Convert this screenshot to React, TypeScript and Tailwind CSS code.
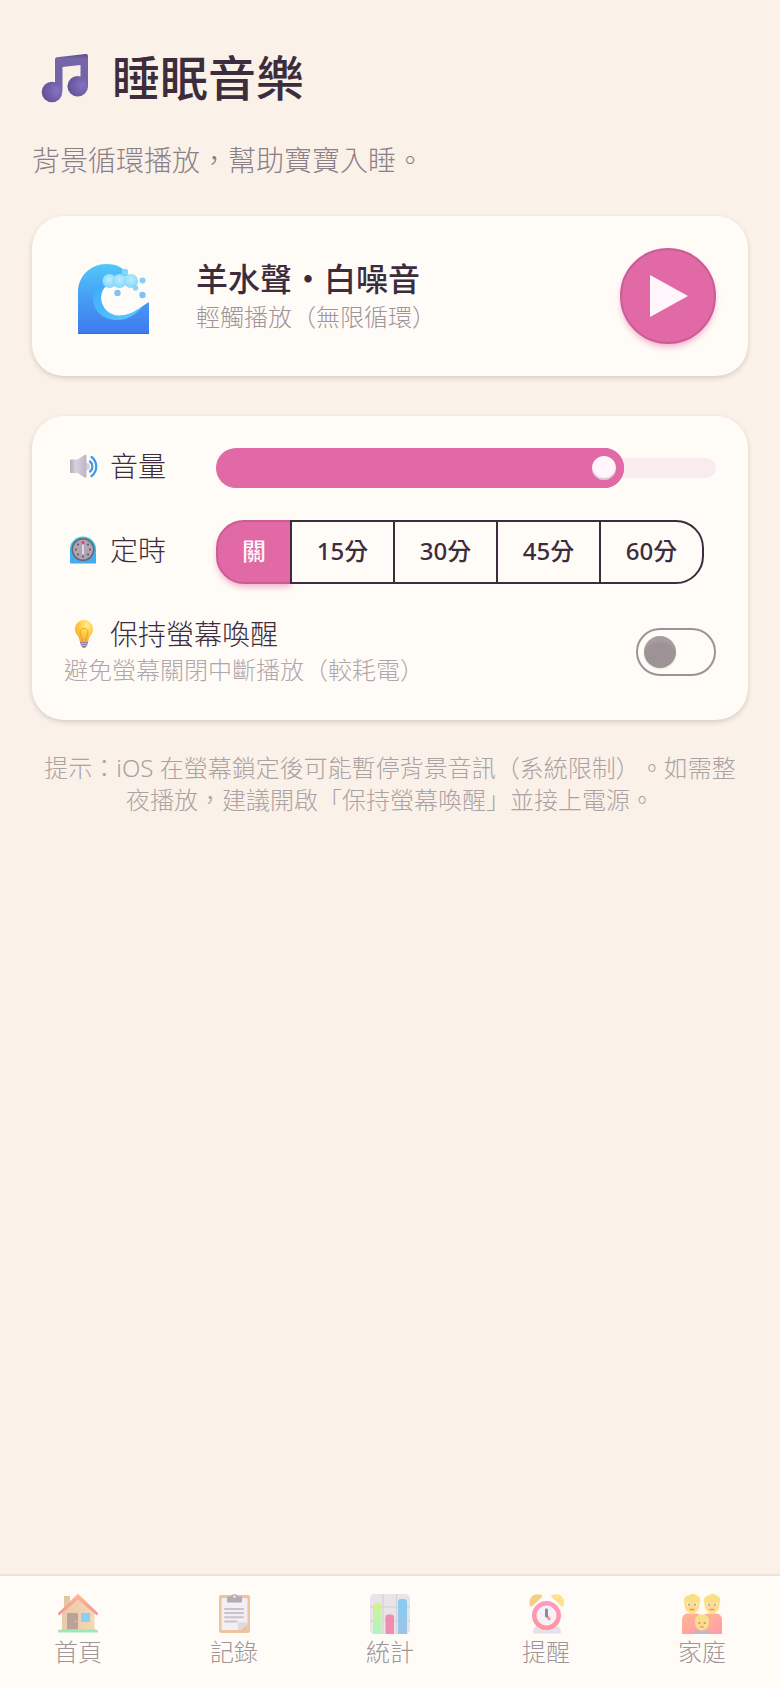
import { useState } from "react";

type IconProps = { className?: string };

function MusicIcon({ className }: IconProps) {
  return (
    <svg viewBox="0 0 48 50" className={className} aria-hidden="true">
      <defs>
        <radialGradient id="note-ball" cx="0.72" cy="0.45" r="0.75">
          <stop offset="0" stopColor="#8672c4" />
          <stop offset="1" stopColor="#5f5092" />
        </radialGradient>
        <linearGradient id="note-beam" x1="0" y1="0" x2="0" y2="1">
          <stop offset="0" stopColor="#5b4a8c" />
          <stop offset="0.12" stopColor="#7566a6" />
          <stop offset="1" stopColor="#7463ab" />
        </linearGradient>
      </defs>
      <path
        d="M15 38V6.500c0-1.300.8-2.100 2-2.300L45.500 1c1.500-.2 2.500.6 2.500 2V34h-7.500V12L22.500 14v24z"
        fill="url(#note-beam)"
      />
      <circle cx="12" cy="39" r="10.300" fill="url(#note-ball)" />
      <circle cx="37.700" cy="33.200" r="10.300" fill="url(#note-ball)" />
    </svg>
  );
}

function WaveIcon({ className }: IconProps) {
  return (
    <svg viewBox="0 0 72 72" className={className} aria-hidden="true">
      <defs>
        <linearGradient id="wave-body" x1="0" y1="0" x2="0" y2="1">
          <stop offset="0" stopColor="#50c8f8" />
          <stop offset="0.5" stopColor="#479cf5" />
          <stop offset="1" stopColor="#3f7aee" />
        </linearGradient>
        <linearGradient id="wave-curl" x1="0" y1="0" x2="1" y2="1">
          <stop offset="0" stopColor="#3da9fb" />
          <stop offset="1" stopColor="#5ccbff" />
        </linearGradient>
        <radialGradient id="wave-foam" cx="0.5" cy="0.4" r="0.6">
          <stop offset="0" stopColor="#b8f0ff" />
          <stop offset="1" stopColor="#86d5fa" />
        </radialGradient>
      </defs>
      <path
        d="M0 70V28C0 12 13 0 28 0c10 0 17 3 22 11L33 18c-6 2-10 8-10 16 0 10 8 18 18 18 14 0 21-9 30-14v32z"
        fill="url(#wave-body)"
      />
      <path
        d="M26 16.500C19 21 15 27 15 34c0 13 10 22 24 22 11 0 20-6 26-14-8 5-14 9.500-24 9.500-10 0-18-8-18-18 0-5 2-9 6-12z"
        fill="url(#wave-curl)"
      />
      <path d="M0 69h71v1H0z" fill="#2f6be8" />
      <circle cx="31.500" cy="17" r="7" fill="url(#wave-foam)" />
      <circle cx="41.500" cy="17" r="7" fill="url(#wave-foam)" />
      <circle cx="53" cy="17" r="7" fill="url(#wave-foam)" />
      <circle cx="47" cy="8" r="3.200" fill="#7fd8fb" />
      <circle cx="57.500" cy="24" r="2.800" fill="#8ad6fb" />
      <circle cx="39.500" cy="29" r="3.200" fill="#7cc4f8" />
      <circle cx="64.500" cy="16.500" r="3" fill="#84cffa" />
      <circle cx="64.500" cy="31" r="3.200" fill="#7cc4f8" />
    </svg>
  );
}

function SpeakerIcon({ className }: IconProps) {
  return (
    <svg viewBox="0 0 28 28" className={className} aria-hidden="true">
      <defs>
        <linearGradient id="speaker-cone" x1="0" y1="0" x2="1" y2="0">
          <stop offset="0" stopColor="#b3abba" />
          <stop offset="0.35" stopColor="#d8d3df" />
          <stop offset="1" stopColor="#bdb4c5" />
        </linearGradient>
      </defs>
      <ellipse cx="17" cy="14.500" rx="3" ry="3.500" fill="#d9d2df" />
      <path
        d="M1 7.500h6.500L14.500 3c1-.5 2 0 2 1v20.500c0 1-1 1.500-2 1L7.500 21H1c-.6 0-1-.4-1-1V8.500c0-.6.4-1 1-1z"
        fill="url(#speaker-cone)"
      />
      <path
        d="M20 9.500c3.300 2.500 3.300 7.500 0 10M21.500 5c6.300 4.500 6.300 14.500 0 19"
        fill="none"
        stroke="#3f97ea"
        strokeWidth="2.200"
        strokeLinecap="round"
      />
    </svg>
  );
}

function TimerIcon({ className }: IconProps) {
  return (
    <svg viewBox="0 0 28 28" className={className} aria-hidden="true">
      <defs>
        <linearGradient id="timer-case" x1="0" y1="0" x2="0" y2="1">
          <stop offset="0" stopColor="#35cbe0" />
          <stop offset="1" stopColor="#42a9f0" />
        </linearGradient>
      </defs>
      <path
        d="M0 26.500V13C0 6 6 .5 13 .5S26 6 26 13v13.500c0 .6-.4 1-1 1H1c-.6 0-1-.4-1-1z"
        fill="url(#timer-case)"
      />
      <circle cx="13" cy="13.500" r="11.500" fill="#6f6472" />
      <circle cx="13" cy="13.500" r="10" fill="#aea4b3" />
      <g fill="#50485a">
        <circle cx="18" cy="8.500" r="0.900" />
        <circle cx="20" cy="13.500" r="0.900" />
        <circle cx="18" cy="18.500" r="0.900" />
        <circle cx="13" cy="20.500" r="0.900" />
        <circle cx="8" cy="18.500" r="0.900" />
        <circle cx="6" cy="13.500" r="0.900" />
        <circle cx="8" cy="8.500" r="0.900" />
      </g>
      <circle cx="13" cy="6.600" r="1.300" fill="#d8305f" />
      <path d="M13 9.500v8" stroke="#e6dfea" strokeWidth="1.800" strokeLinecap="round" />
    </svg>
  );
}

function BulbIcon({ className }: IconProps) {
  return (
    <svg viewBox="0 0 28 28" className={className} aria-hidden="true">
      <defs>
        <radialGradient id="bulb-glass" cx="0.65" cy="0.25" r="0.8">
          <stop offset="0" stopColor="#fff08a" />
          <stop offset="0.5" stopColor="#ffcd42" />
          <stop offset="1" stopColor="#f5a93a" />
        </radialGradient>
      </defs>
      <path
        d="M14 0c5 0 9 4 9 9 0 3.500-2 5.500-3.500 8-.8 1.500-.8 4-1.500 4.500h-8c-.7-.5-.7-3-1.500-4.500C7 14.500 5 12.500 5 9c0-5 4-9 9-9z"
        fill="url(#bulb-glass)"
      />
      <path
        d="M12.500 21l-2-7c-1-4 1-5.500 3.500-5.500s4.500 1.500 3.500 5.500l-2 7"
        fill="none"
        stroke="#f0a02e"
        strokeWidth="1"
      />
      <path d="M10 21.500h8v2.200l-1 .6.500 1-1.500 1.700c-.8 1.300-3.200 1.300-4 0L10.500 25l.5-.8-1-.7z" fill="#9a80ab" />
      <path d="M10.500 23.500h7M11 25.500h5.500" stroke="#c9b5d2" strokeWidth="0.800" />
    </svg>
  );
}

function HomeIcon({ className }: IconProps) {
  return (
    <svg viewBox="0 0 40 40" className={className} aria-hidden="true">
      <defs>
        <linearGradient id="home-wall" x1="0" y1="0" x2="1" y2="0">
          <stop offset="0" stopColor="#dba976" />
          <stop offset="1" stopColor="#efc18c" />
        </linearGradient>
        <linearGradient id="home-roof" x1="0" y1="0" x2="0" y2="1">
          <stop offset="0" stopColor="#ff8a4e" />
          <stop offset="1" stopColor="#e8535f" />
        </linearGradient>
      </defs>
      <path d="M6 2h6v12H6z" fill="#d2a36b" />
      <path d="M4 18L20 3l16.500 16v17H4z" fill="url(#home-wall)" />
      <path
        d="M19 .7c.6-.6 1.400-.6 2 0L39.500 18.500c.5.5.5 1 .5 1.500 0 1.200-1.300 1.500-2 .8L20 5.500 2 20.800c-.7.700-2 .4-2-.8 0-.5 0-1 .5-1.500z"
        fill="url(#home-roof)"
      />
      <rect x="9" y="19" width="11" height="16.500" rx="1" fill="#8e6659" />
      <circle cx="17.500" cy="27.500" r="0.900" fill="#d9a05c" />
      <rect x="23" y="19" width="9" height="9" rx="0.600" fill="#3fb2f5" />
      <path d="M2 35.500h36c1.200 0 2 1 2 2v1H0v-1c0-1 .8-2 2-2z" fill="#5ddb86" />
    </svg>
  );
}

function ClipboardIcon({ className }: IconProps) {
  return (
    <svg viewBox="0 0 40 40" className={className} aria-hidden="true">
      <rect x="5" y="1" width="31" height="38" rx="2" fill="#e3a066" />
      <rect x="7.500" y="4" width="26" height="32" rx="1" fill="#ece5f3" />
      <path d="M24 36v-6.500c0-.6.400-1 1-1h8.500V30L27 36z" fill="#c9c1d3" />
      <path d="M27 36l6.500-6v6z" fill="#e3a066" />
      <path
        d="M14 8.500c-.6 0-1-.4-1-1V3.500c0-.6.400-1 1-1h3c.5-3 6.500-3 7 0h3c.6 0 1 .4 1 1v4c0 .6-.4 1-1 1z"
        fill="#7f7687"
      />
      <circle cx="20.500" cy="2.700" r="1.200" fill="#ece5f3" />
      <path
        d="M11 15h18M11 19h18M11 23.300h18M11 27.500h11.500"
        stroke="#a59cad"
        strokeWidth="2"
        strokeLinecap="round"
      />
    </svg>
  );
}

function ChartIcon({ className }: IconProps) {
  return (
    <svg viewBox="0 0 40 40" className={className} aria-hidden="true">
      <defs>
        <linearGradient id="bar-green" x1="0" y1="0" x2="0" y2="1">
          <stop offset="0" stopColor="#b7ea4e" />
          <stop offset="1" stopColor="#7af0a0" />
        </linearGradient>
        <linearGradient id="bar-blue" x1="0" y1="0" x2="0" y2="1">
          <stop offset="0" stopColor="#39adf0" />
          <stop offset="1" stopColor="#5c9fe0" />
        </linearGradient>
      </defs>
      <rect width="40" height="40" rx="4.500" fill="#dcd5e0" />
      <path
        d="M13 0v40M26.500 0v40M0 12.800h40M0 26.800h40"
        stroke="#bfb8c4"
        strokeWidth="1.300"
      />
      <path d="M3 40V11.500C3 10 4 9 5.500 9H9c1.500 0 2.500 1 2.500 2.500V40z" fill="url(#bar-green)" />
      <path d="M15.500 40V23c0-1.500 1-2.500 2.500-2.500h3.500c1.500 0 2.500 1 2.500 2.500v17z" fill="#e8437f" />
      <path d="M28 40V7.500C28 6 29 5 30.500 5h4C36 5 37 6 37 7.500V40z" fill="url(#bar-blue)" />
    </svg>
  );
}

function AlarmIcon({ className }: IconProps) {
  return (
    <svg viewBox="0 0 40 40" className={className} aria-hidden="true">
      <defs>
        <linearGradient id="alarm-ring" x1="0" y1="0" x2="0" y2="1">
          <stop offset="0" stopColor="#fb5f9f" />
          <stop offset="1" stopColor="#ff4f66" />
        </linearGradient>
      </defs>
      <path d="M10 32h21c3 1 4 4 4 6 0 1-.5 1.500-1.500 1.500h-25C7.500 39.500 7 39 7 38c0-2 1-5 3-6z" fill="#dccbe4" />
      <path d="M4 12C1.500 4 8-2 15.500 1c1 .5 1 1.500.5 2L6.500 12c-.6.7-2 1-2.500 0z" fill="#f5b13c" />
      <path d="M37.500 12c2.500-8-4-14-11.500-11-1 .5-1 1.500-.5 2L35 12c.6.700 2 1 2.500 0z" fill="#fbd244" />
      <circle cx="20.500" cy="21.500" r="14.500" fill="url(#alarm-ring)" />
      <circle cx="20.500" cy="21.500" r="10" fill="#f3edf7" />
      <path d="M20.500 21.500l2.800 3.600" stroke="#f0525c" strokeWidth="2.600" strokeLinecap="round" />
      <path d="M20.500 16v6" stroke="#3f3552" strokeWidth="2.800" strokeLinecap="round" />
    </svg>
  );
}

function AdultHead() {
  return (
    <g>
      <ellipse cx="10" cy="11" rx="7.500" ry="8.500" fill="#ffca3f" />
      <path
        d="M2 10C1 4 4 1 7 1.500 9-.5 13-.2 14 1.500c3-.2 5 3 4 8.500-1-3-2.500-4-4-4.500-3 1-7 1-9.500 0C3.500 7 2.700 8 2 10z"
        fill="#f6cf3a"
      />
      <circle cx="6.800" cy="10.500" r="1.700" fill="#fff6e0" />
      <circle cx="13.200" cy="10.500" r="1.700" fill="#fff6e0" />
      <circle cx="7" cy="10.700" r="1.100" fill="#4a6c96" />
      <circle cx="13" cy="10.700" r="1.100" fill="#4a6c96" />
      <path d="M8.200 15.500h3.600" stroke="#d9463f" strokeWidth="1.500" strokeLinecap="round" />
    </g>
  );
}

function FamilyIcon({ className }: IconProps) {
  return (
    <svg viewBox="0 0 40 40" className={className} aria-hidden="true">
      <defs>
        <linearGradient id="family-shirt" x1="0" y1="0" x2="0.6" y2="1">
          <stop offset="0" stopColor="#ff8a4e" />
          <stop offset="1" stopColor="#ff6370" />
        </linearGradient>
      </defs>
      <path d="M0 40V26c0-4 2.500-6.500 6-6.500h8c3.500 0 6 2.500 6 6.500v14z" fill="url(#family-shirt)" />
      <path d="M20 40V26c0-4 2.500-6.500 6-6.500h8c3.500 0 6 2.500 6 6.500v14z" fill="url(#family-shirt)" />
      <AdultHead />
      <g transform="translate(20 0)">
        <AdultHead />
      </g>
      <path d="M12 40c0-3 3-4.500 8-4.500s7.500 1.500 7.500 4.500z" fill="#9690a0" />
      <ellipse cx="20" cy="29" rx="7" ry="7.500" fill="#ffca3f" />
      <path d="M13 28c-.5-5 2.500-7.500 7-7.500s7.500 2.500 7 7.500c-1-2.500-2-3.500-3-3.500-3 .8-5 .8-8 0-1.500.5-2.500 1.500-3 3.500z" fill="#f6cf3a" />
      <circle cx="17.300" cy="29" r="1.100" fill="#4a6c96" />
      <circle cx="22.700" cy="29" r="1.100" fill="#4a6c96" />
      <path d="M18.500 32.800h3" stroke="#d9463f" strokeWidth="1.200" strokeLinecap="round" />
    </svg>
  );
}

const timers = [
  { minutes: 0, label: "關" },
  { minutes: 15, label: "15分" },
  { minutes: 30, label: "30分" },
  { minutes: 45, label: "45分" },
  { minutes: 60, label: "60分" },
];

const tabs = [
  { href: "#home", label: "首頁", Icon: HomeIcon },
  { href: "#records", label: "記錄", Icon: ClipboardIcon },
  { href: "#stats", label: "統計", Icon: ChartIcon },
  { href: "#reminders", label: "提醒", Icon: AlarmIcon },
  { href: "#family", label: "家庭", Icon: FamilyIcon },
];

const cardClass =
  "rounded-[32px] bg-[#fffcf7] p-8 shadow-[0_2px_5px_rgba(90,60,30,0.2)]";

export default function App() {
  const [playing, setPlaying] = useState(false);
  const [volume, setVolume] = useState(80);
  const [timer, setTimer] = useState(0);
  const [keepAwake, setKeepAwake] = useState(false);

  return (
    <div className="flex min-h-screen flex-col bg-[#faf1e9] font-['Noto_Sans','Noto_Sans_CJK_TC',sans-serif] font-light text-[#3d2c3c] [text-spacing-trim:space-all]">
      <main className="flex-1 px-8 pt-10 pb-8">
        <header className="mb-9">
          <h1 className="flex items-center gap-4 text-[48px] leading-[76px] font-medium">
            <span className="flex w-16 justify-center">
              <MusicIcon className="h-[50px] w-12" />
            </span>
            睡眠音樂
          </h1>
          <p className="mt-6 text-[28px] leading-10 text-[#8b7f87]">
            背景循環播放，幫助寶寶入睡。
          </p>
        </header>

        <section className={`${cardClass} flex items-center gap-8`}>
          <div className="flex w-[100px] justify-center pt-2">
            <WaveIcon className="size-[72px]" />
          </div>
          <div className="flex-1">
            <h2 className="text-[32px] leading-10 font-medium">羊水聲・白噪音</h2>
            <p className="mt-0.5 text-[24px] leading-8 text-[#9e9499]">
              輕觸播放（無限循環）
            </p>
          </div>
          <button
            type="button"
            aria-label={playing ? "暫停" : "播放"}
            onClick={() => setPlaying(!playing)}
            className="flex size-24 items-center justify-center rounded-full border-2 border-[#cc5c96] bg-[#e069a6] pl-0.5 shadow-[0_4px_6px_-1px_rgba(224,105,166,0.5)]"
          >
            <svg viewBox="0 0 38 42" className="h-[42px] w-[38px]" aria-hidden="true">
              {playing ? (
                <path d="M4 2h10v38H4zM24 2h10v38H24z" fill="#fff5fa" />
              ) : (
                <path d="M0 0l38 21L0 42z" fill="#fff5fa" />
              )}
            </svg>
          </button>
        </section>

        <section className={`${cardClass} mt-10 flex flex-col gap-8`}>
          <div className="flex items-center">
            <label
              htmlFor="volume"
              className="flex w-[152px] items-center gap-1.5 pb-1 text-[28px] leading-9"
            >
              <span className="flex w-10 justify-center">
                <SpeakerIcon className="size-7" />
              </span>
              音量
            </label>
            <div className="relative flex h-10 flex-1 items-center">
              <div className="h-5 w-full rounded-full bg-[#faecee]" />
              <div
                className="absolute inset-y-0 left-0 rounded-full bg-[#e069a6]"
                style={{ width: `calc(40px + (100% - 40px) * ${volume / 100})` }}
              />
              <input
                id="volume"
                type="range"
                min={0}
                max={100}
                value={volume}
                onChange={(e) => setVolume(Number(e.target.value))}
                className="absolute inset-0 h-10 w-full cursor-pointer appearance-none bg-transparent [&::-webkit-slider-thumb]:size-10 [&::-webkit-slider-thumb]:appearance-none [&::-webkit-slider-thumb]:rounded-full [&::-webkit-slider-thumb]:border-8 [&::-webkit-slider-thumb]:border-[#e069a6] [&::-webkit-slider-thumb]:bg-[#fff5fa] [&::-webkit-slider-thumb]:shadow-[inset_0_-2px_1px_rgba(61,44,60,0.2)]"
              />
            </div>
          </div>

          <div className="flex items-center">
            <span
              id="timer-label"
              className="flex w-[152px] items-center gap-1.5 pb-1 text-[28px] leading-9"
            >
              <span className="flex w-10 justify-center">
                <TimerIcon className="size-7" />
              </span>
              定時
            </span>
            <div role="group" aria-labelledby="timer-label" className="flex">
              {timers.map((item) => (
                <button
                  key={item.minutes}
                  type="button"
                  aria-pressed={timer === item.minutes}
                  onClick={() => setTimer(item.minutes)}
                  className={`-ml-0.5 h-16 w-[105px] border-2 pb-0.5 text-[24px] leading-8 font-medium first:ml-0 first:w-[76px] first:rounded-l-[28px] last:rounded-r-[28px] ${
                    timer === item.minutes
                      ? "border-[#cc5c96] bg-[#e069a6] text-[#fff5fa] shadow-[0_4px_6px_-1px_rgba(224,105,166,0.5)]"
                      : "relative border-[#3d2c3c] bg-[#fffcf7]"
                  }`}
                >
                  {item.label}
                </button>
              ))}
            </div>
          </div>

          <div className="flex items-center justify-between">
            <div className="pb-0.5">
              <label
                htmlFor="keep-awake"
                className="flex items-center gap-1.5 text-[28px] leading-9"
              >
                <span className="flex w-10 justify-center">
                  <BulbIcon className="size-7" />
                </span>
                保持螢幕喚醒
              </label>
              <p className="mt-0.5 text-[24px] leading-8 text-[#b0a7ab]">
                避免螢幕關閉中斷播放（較耗電）
              </p>
            </div>
            <input
              id="keep-awake"
              type="checkbox"
              role="switch"
              checked={keepAwake}
              onChange={(e) => setKeepAwake(e.target.checked)}
              className="flex h-12 w-20 cursor-pointer appearance-none items-center rounded-full border-2 border-[#9d9296] px-1.5 before:size-8 before:rounded-full before:bg-[#9d9296] before:shadow-[inset_0_8px_2px_-2px_rgba(255,255,255,0.1),0_1px_2px_rgba(61,44,60,0.15)] before:content-[''] checked:justify-end checked:border-[#e069a6] checked:before:bg-[#e069a6]"
            />
          </div>
        </section>

        <p className="mt-8 px-1 text-center text-[24px] leading-8 text-[#aca1a3]">
          提示：iOS 在螢幕鎖定後可能暫停背景音訊（系統限制）。如需整夜播放，建議開啟「保持螢幕喚醒」並接上電源。
        </p>
      </main>

      <nav className="sticky bottom-0 grid h-[114px] grid-cols-5 border-t-2 border-[#f0e2d6] bg-[#fffcf7] pt-[18px]">
        {tabs.map(({ href, label, Icon }) => (
          <a
            key={href}
            href={href}
            className="flex flex-col items-center gap-0.5 text-[24px] leading-8 text-[#9e9499]"
          >
            <Icon className="size-10 opacity-60" />
            {label}
          </a>
        ))}
      </nav>
    </div>
  );
}
